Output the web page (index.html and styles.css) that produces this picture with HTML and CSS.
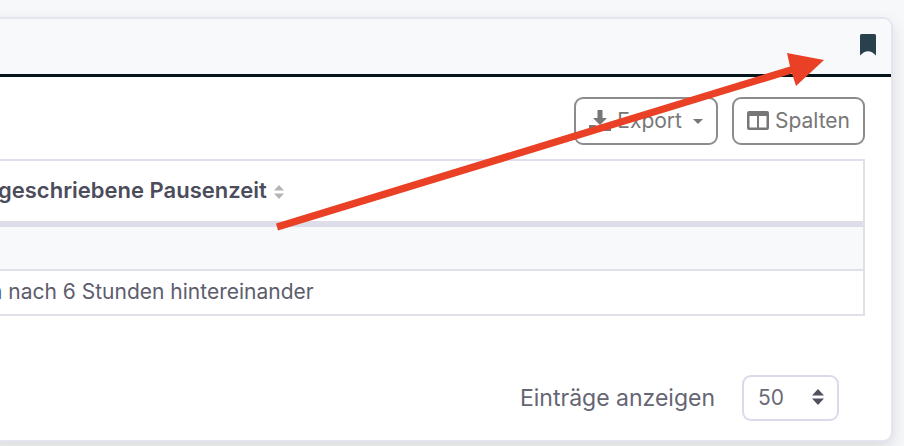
FILE: index.html
```html
<!DOCTYPE html>
<html lang="de">
<head>
    <meta charset="UTF-8">
    <meta name="viewport" content="width=device-width, initial-scale=1.0">
    <title>Pausenzeiten</title>
    <link rel="stylesheet" href="styles.css">
</head>
<body>

<div class="card">
    <div class="card-header">
        <button type="button" class="bookmark" aria-label="Lesezeichen">
            <svg width="16" height="22" viewBox="0 0 16 22"><path d="M1.5 0h13Q16 0 16 1.500V21.500Q8 13 0 21.500V1.500Q0 0 1.500 0z" fill="#29414d"/></svg>
        </button>
    </div>

    <div class="card-body">
        <div class="toolbar">
            <button type="button" class="btn">
                <svg width="22" height="22" viewBox="0 0 22 22" fill="currentColor"><path d="M8.500 0h5v8h4.500l-7 7-7-7h4.500z"/><path d="M0 15h6.500l3 3h3l3-3H22v6H0z"/></svg>
                Export
                <span class="caret"></span>
            </button>
            <button type="button" class="btn">
                <svg width="22" height="20" viewBox="0 0 22 20"><path fill="currentColor" fill-rule="evenodd" d="M2 0h18q2 0 2 2v15q0 2-2 2H2q-2 0-2-2V2q0-2 2-2zM2.500 5v11.500H10V5zM12 5v11.500h7.500V5z"/></svg>
                Spalten
            </button>
        </div>

        <table>
            <thead>
                <tr>
                    <th>geschriebene Pausenzeit
                        <svg class="sort" width="10" height="14" viewBox="0 0 10 14"><path d="M5 0l5 5.500H0zM5 14l5-5.500H0z" fill="#b4b4b8"/></svg>
                    </th>
                </tr>
            </thead>
            <tbody>
                <tr class="filter"><td></td></tr>
                <tr><td>n nach 6 Stunden hintereinander</td></tr>
            </tbody>
        </table>

        <div class="paging">
            <label for="entries">Einträge anzeigen</label>
            <div class="select">
                <select id="entries">
                    <option>50</option>
                    <option>100</option>
                </select>
                <svg width="12" height="16" viewBox="0 0 12 16"><path d="M6 0l6 6.500H0zM6 16l6-6.500H0z" fill="#50505f"/></svg>
            </div>
        </div>
    </div>
</div>

<!-- Pfeil zum Lesezeichen -->
<svg class="arrow" width="548" height="178" viewBox="0 0 548 178"><path d="M0 170.500L514 13.500 511 0 548 7 520 33 516 20.500 2 177.500z" fill="#ea4025"/></svg>

</body>
</html>
```
FILE: styles.css
```css
* {
    box-sizing: border-box;
}
body {
    font-family: Inter, sans-serif;
    font-size: 21px;
    line-height: 24px;
    color: #5d5d6c;
    margin: 0;
    padding: 17px 11px 5px 0;
    background: #f7f8fa;
    overflow: hidden;
}
.card {
    margin-left: -12px;
    background: #fff;
    border: 2px solid #e4e5f0;
    border-left: none;
    border-radius: 0 10px 10px 0;
    box-shadow: 0 6px 16px rgba(0, 0, 0, 0.12);
}
.card-header {
    display: flex;
    justify-content: flex-end;
    align-items: center;
    height: 58px;
    padding: 0 15px 4px;
    background: #f8f9fb;
    border-bottom: 3px solid #051519;
    border-radius: 0 8px 0 0;
}
.bookmark {
    display: flex;
    padding: 0;
    border: none;
    background: none;
}
.card-body {
    padding: 20px 26px 19px 0;
}
.toolbar {
    display: flex;
    justify-content: flex-end;
    gap: 14px;
    margin-bottom: 14px;
}
.btn {
    display: flex;
    align-items: center;
    gap: 6px;
    height: 48px;
    padding: 0 13px;
    font: inherit;
    color: #777;
    background: #fff;
    border: 2px solid #8c8c8c;
    border-radius: 9px;
}
.caret {
    margin-left: 5px;
    border: 5px solid transparent;
    border-top-color: #777;
    border-bottom: none;
}
table {
    width: 100%;
    border-collapse: separate;
    border-spacing: 0;
    border: 2px solid #e0e0eb;
    border-left: none;
    border-bottom: none;
}
th {
    height: 66px;
    padding: 0 0 2px 10px;
    text-align: left;
    font-size: 22px;
    font-weight: 600;
    color: #4c4c5b;
    border-bottom: 6px solid #dedeea;
}
.sort {
    margin-left: 2px;
    vertical-align: -1px;
}
td {
    height: 45px;
    padding: 0 0 2px 2px;
    border-bottom: 2px solid #e0e0eb;
}
.filter td {
    height: 44px;
    background: #f8f9fb;
}
.paging {
    display: flex;
    justify-content: flex-end;
    align-items: center;
    gap: 27px;
    padding-right: 26px;
    margin-top: 59px;
    font-size: 23px;
    color: #656573;
}
.select {
    position: relative;
}
.select select {
    display: block;
    width: 97px;
    height: 46px;
    padding: 0 14px;
    font: inherit;
    font-size: 21px;
    color: #6b6b78;
    background: #fff;
    border: 2px solid #dadaea;
    border-radius: 9px;
    appearance: none;
}
.select svg {
    position: absolute;
    top: 14px;
    right: 15px;
    pointer-events: none;
}
.arrow {
    position: absolute;
    top: 53px;
    left: 276px;
    pointer-events: none;
}
```
